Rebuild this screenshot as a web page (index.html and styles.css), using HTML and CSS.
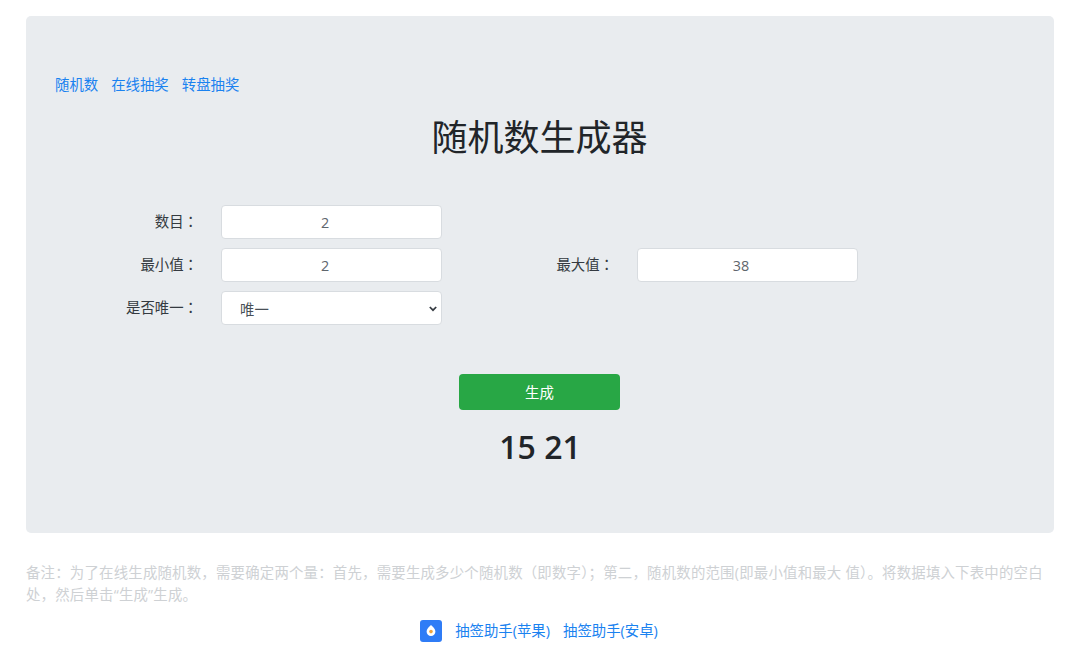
FILE: index.html
```html
<!DOCTYPE html>
<html lang="zh">
<head>
    <meta charset="UTF-8">
    <title>随机数生成器</title>
    <link rel="stylesheet" href="styles.css">
</head>
<body>
<div class="jumbotron">
    <div class="nav-links">
        <a href="#">随机数</a>
        <a href="#">在线抽奖</a>
        <a href="#">转盘抽奖</a>
    </div>
    <h1 class="title">随机数生成器</h1>
    <form class="form-grid">
        <label class="form-label">数目<span class="colon" lang="zh-TW">：</span></label>
        <input class="form-control" type="text" value="2">
        <span></span>
        <span></span>

        <label class="form-label">最小值<span class="colon" lang="zh-TW">：</span></label>
        <input class="form-control" type="text" value="2">
        <label class="form-label">最大值<span class="colon" lang="zh-TW">：</span></label>
        <input class="form-control" type="text" value="38">

        <label class="form-label">是否唯一<span class="colon" lang="zh-TW">：</span></label>
        <div class="select-wrap">
            <select class="form-select">
                <option>唯一</option>
                <option>不唯一</option>
            </select>
            <svg class="select-arrow" width="8" height="6" viewBox="0 0 8 6"><path d="M.8 1l3.2 3.2L7.2 1" fill="none" stroke="#343a40" stroke-width="1.7"/></svg>
        </div>
        <span></span>
        <span></span>
    </form>
    <div class="action">
        <button class="btn-generate" type="button">生成</button>
    </div>
    <div class="result">15 21</div>
</div>
<p class="note">备注：为了在线生成随机数，需要确定两个量：首先，需要生成多少个随机数（即数字）；第二，随机数的范围(即最小值和最大 值）。将数据填入下表中的空白处，然后单击“生成”生成。</p>
<div class="apps">
    <svg class="app-icon" width="22" height="22" viewBox="0 0 22 22">
        <rect width="22" height="22" rx="3" fill="#2f7cf6"/>
        <path d="M11 5c2.1 2.2 4.4 3.9 4.4 6.6a4.4 4.4 0 0 1-8.8 0C6.600 8.900 8.900 7.200 11 5z" fill="#fff"/>
        <circle cx="11" cy="11.600" r="1.800" fill="#f2a33a"/>
    </svg>
    <a href="#">抽签助手(苹果)</a>
    <a href="#">抽签助手(安卓)</a>
</div>
</body>
</html>
```

FILE: styles.css
```css
* {
    box-sizing: border-box;
}

body {
    margin: 0;
    padding: 16px 26px 0;
    font-family: "Open Sans", "Noto Sans CJK SC", sans-serif;
    font-size: 14.4px;
    color: #212529;
    background-color: #fff;
}

a {
    color: #1a82f0;
    text-decoration: none;
}

.jumbotron {
    height: 517px;
    padding: 59px 29px 0;
    background-color: #e9ecef;
    border-radius: 5px;
}

.nav-links {
    display: flex;
    gap: 13px;
    height: 20px;
    line-height: 20px;
}

.title {
    margin: 18px 0 0;
    padding-right: 1px;
    height: 50px;
    font-size: 36px;
    font-weight: 400;
    line-height: 50px;
    text-align: center;
}

.form-grid {
    display: grid;
    grid-template-columns: 142px 221px 147px 221px;
    grid-auto-rows: 34px;
    gap: 9px 24px;
    width: 803px;
    margin-top: 42px;
}

.form-label {
    margin-right: -1px;
    line-height: 32px;
    text-align: right;
    color: #343a40;
}

.colon {
    font-family: "Noto Sans CJK TC", sans-serif;
}

.form-control,
.form-select {
    width: 221px;
    height: 34px;
    padding: 1px 12px 0;
    font-family: inherit;
    font-size: 14.4px;
    color: #5f666d;
    background-color: #fff;
    border: 1px solid #d8dce0;
    border-radius: 4px;
    outline: none;
}

.form-control {
    padding-right: 25px;
    text-align: center;
}

.select-wrap {
    position: relative;
    width: 221px;
}

.form-select {
    padding-left: 18px;
    padding-top: 2px;
    color: #495057;
    appearance: none;
}

.select-arrow {
    position: absolute;
    top: 15px;
    right: 5px;
}

.action {
    display: flex;
    justify-content: center;
    margin-top: 49px;
    padding-right: 1px;
}

.btn-generate {
    width: 161px;
    height: 36px;
    padding-bottom: 2px;
    font-family: inherit;
    font-size: 14.4px;
    color: #fff;
    background-color: #28a745;
    border: 0;
    border-radius: 4px;
}

.result {
    margin-top: 15px;
    font-size: 32px;
    font-weight: 600;
    line-height: 44px;
    text-align: center;
}

.note {
    margin: 29px 0 0;
    line-height: 22px;
    letter-spacing: .22px;
    color: #ced1d4;
}

.apps {
    display: flex;
    align-items: center;
    justify-content: center;
    gap: 13px;
    margin-top: 14px;
    padding-right: 2px;
    height: 22px;
}

.apps a {
    padding-bottom: 4px;
}
```
